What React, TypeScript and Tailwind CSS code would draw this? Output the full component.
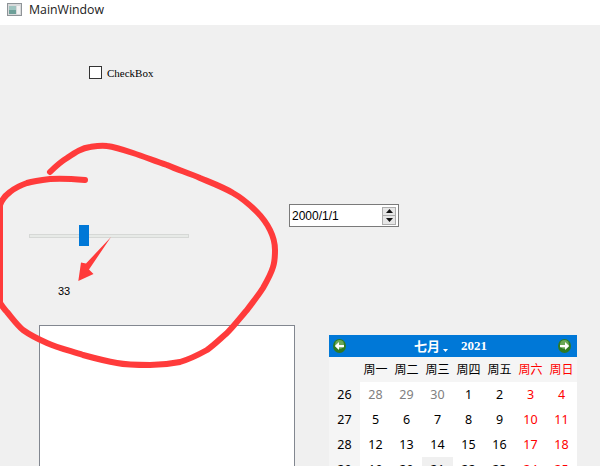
const cjk = "font-['Noto_Sans','Noto_Sans_CJK_SC',sans-serif]";

const rows: { w: string; days: { t: string; c?: string }[] }[] = [
  { w: "26", days: [{ t: "28", c: "text-[#808080]" }, { t: "29", c: "text-[#808080]" }, { t: "30", c: "text-[#808080]" }, { t: "1" }, { t: "2" }, { t: "3" }, { t: "4" }] },
  { w: "27", days: [{ t: "5" }, { t: "6" }, { t: "7" }, { t: "8" }, { t: "9" }, { t: "10" }, { t: "11" }] },
  { w: "28", days: [{ t: "12" }, { t: "13" }, { t: "14" }, { t: "15" }, { t: "16" }, { t: "17" }, { t: "18" }] },
  { w: "29", days: [{ t: "19" }, { t: "20" }, { t: "21", c: "bg-[#f0f0f0]" }, { t: "22" }, { t: "23" }, { t: "24" }, { t: "25" }] },
];
const heads = ["周一", "周二", "周三", "周四", "周五", "周六", "周日"];

function NavArrow({ right }: { right?: boolean }) {
  return (
    <svg width="13" height="14" viewBox="0 0 13 14" className="shrink-0">
      <ellipse cx="6.5" cy="7" rx="6.5" ry="7" fill="#2f7a22" />
      <circle cx="6.5" cy="5.5" r="4.5" fill="#6aa858" />
      <path
        d={right ? "M2 6h5V3l4.2 4-4.2 4V8.2H2z" : "M11 6H6V3L1.8 7 6 11V8.2h5z"}
        fill="#fff"
      />
    </svg>
  );
}

function Calendar() {
  return (
    <div className={`w-[248px] shrink-0 ${cjk}`}>
      <div className="h-[22px] bg-[#0078d7] flex items-center justify-between pl-[4px] pr-[6px]">
        <NavArrow />
        <div className="flex items-center text-white font-bold">
          <span className="text-[13px] font-['Noto_Sans_CJK_SC',sans-serif]">七月</span>
          <svg width="5" height="3" viewBox="0 0 5 3" className="ml-[3px] mt-[9px]"><path d="M0 0h5L2.5 3z" fill="#fff" /></svg>
          <span className="text-[13px] ml-[13px] mr-[3px] font-['Liberation_Serif',serif]">2021</span>
        </div>
        <NavArrow right />
      </div>
      <div className="grid grid-cols-8 bg-white text-[12.5px] leading-[25px] text-center text-black">
        <div className="bg-[#f5f5f5] h-[25px]" />
        {heads.map((h, i) => (
          <div key={h} className={`bg-[#f5f5f5] h-[25px] text-[12px] ${i > 4 ? "text-[#ff0000]" : ""}`}>{h}</div>
        ))}
        {rows.map((r) => (
          <div key={r.w} className="contents">
            <div className="bg-[#f5f5f5] h-[25px]">{r.w}</div>
            {r.days.map((d, i) => (
              <div key={d.t} className={`h-[25px] ${i > 4 ? "text-[#ff0000]" : ""} ${d.c ?? ""}`}>{d.t}</div>
            ))}
          </div>
        ))}
      </div>
    </div>
  );
}

export default function App() {
  return (
    <div className="relative w-[600px] h-[466px] overflow-hidden bg-[#f0f0f0] flex flex-col">
      <div className="h-[25px] shrink-0 bg-white flex items-center pl-[7px] pb-[7px] pt-[1px]">
        <svg width="15" height="13" viewBox="0 0 15 13" className="shrink-0">
          <rect x="0.5" y="0.5" width="14" height="12" fill="#d8dadb" stroke="#8f9498" />
          <rect x="2" y="3" width="7" height="8" fill="#6d9f98" />
          <rect x="2" y="3" width="7" height="4" fill="#9fc4c0" />
          <rect x="10" y="3" width="3" height="8" fill="#f2f2f2" />
        </svg>
        <span className="ml-[7px] text-[12.3px] leading-[17px] text-[#1a1a1a] font-['Open_Sans',sans-serif]">MainWindow</span>
      </div>

      <div className="flex items-center pl-[89px] pt-[40px] h-[55px] shrink-0">
        <div className="w-[13px] h-[13px] border border-[#333333] bg-white shrink-0" />
        <span className="ml-[5px] mt-[1px] text-[11px] leading-[14px] text-black font-['Liberation_Serif',serif]">CheckBox</span>
      </div>

      <div className="flex items-start pt-[124px] shrink-0">
        <div className="ml-[29px] w-[160px] shrink-0">
          <div className="relative h-[21px] mt-[21px] flex items-center">
            <div className="w-full h-[4px] bg-[#e7eae7] border border-[#d6d8d6]" />
            <div className="absolute left-[50px] top-0 w-[10px] h-[21px] bg-[#0078d7]" />
          </div>
          <div className="ml-[29px] mt-[38px] text-[11px] leading-[14px] text-black font-['Liberation_Sans',sans-serif]">33</div>
        </div>
        <div className="ml-[100px] w-[110px] h-[23px] border border-[#7a7a7a] bg-white flex items-center justify-between pl-[2px] pr-[2px] shrink-0">
          <span className="text-[12px] leading-[16px] text-black font-['Liberation_Sans',sans-serif]">2000/1/1</span>
          <div className="w-[14px] h-[18px] flex flex-col border border-[#adadad] bg-[#e6e6e6]">
            <div className="flex-1 flex items-center justify-center border-b border-[#adadad]">
              <svg width="7" height="4" viewBox="0 0 7 4"><path d="M3.5 0L7 4H0z" fill="#111" /></svg>
            </div>
            <div className="flex-1 flex items-center justify-center">
              <svg width="7" height="4" viewBox="0 0 7 4"><path d="M0 0h7L3.5 4z" fill="#111" /></svg>
            </div>
          </div>
        </div>
      </div>

      <div className="flex items-start pt-[27px] flex-1 min-h-0">
        <div className="ml-[39px] w-[256px] h-[200px] border border-[#828790] bg-white shrink-0" />
        <div className="ml-[34px] mt-[10px]">
          <Calendar />
        </div>
      </div>

      <svg width="600" height="466" viewBox="0 0 600 466" className="absolute inset-0 pointer-events-none">
        <path
          d="M50 172 C56 166 62 161 67 158 C76 152 82 148 90 147 C96 146 101 145 107 146 C115 147 124 150 133 153 C145 157 155 161 167 165 C178 170 189 173 200 178 C212 183 223 187 233 193 C242 198 250 205 257 212 C263 218 267 224 270 230 C273 236 275 243 275 250 C275 256 275 261 273 267 C271 274 267 281 263 288 C258 296 252 303 247 310 C240 318 234 326 227 333 C220 339 214 345 207 350 C198 355 190 359 180 362 C170 364 160 365 150 365 C138 365 127 365 117 363 C105 361 94 358 83 355 C71 351 58 348 47 343 C38 339 30 335 23 330 C17 325 12 318 7 312 C4 309 2 306 0 303 L0 205 C2 199 6 195 10 192 C15 188 21 185 27 183 C34 181 42 180 50 179 C62 178 74 179 85 180"
          fill="none"
          stroke="#ff3b3b"
          strokeWidth="6"
          strokeLinecap="round"
          strokeLinejoin="round"
        />
        <path d="M111 237L86 263.5L81 262.5L78.3 281L93.5 274L89 269.5Z" fill="#ff3b3b" />
      </svg>
    </div>
  );
}
